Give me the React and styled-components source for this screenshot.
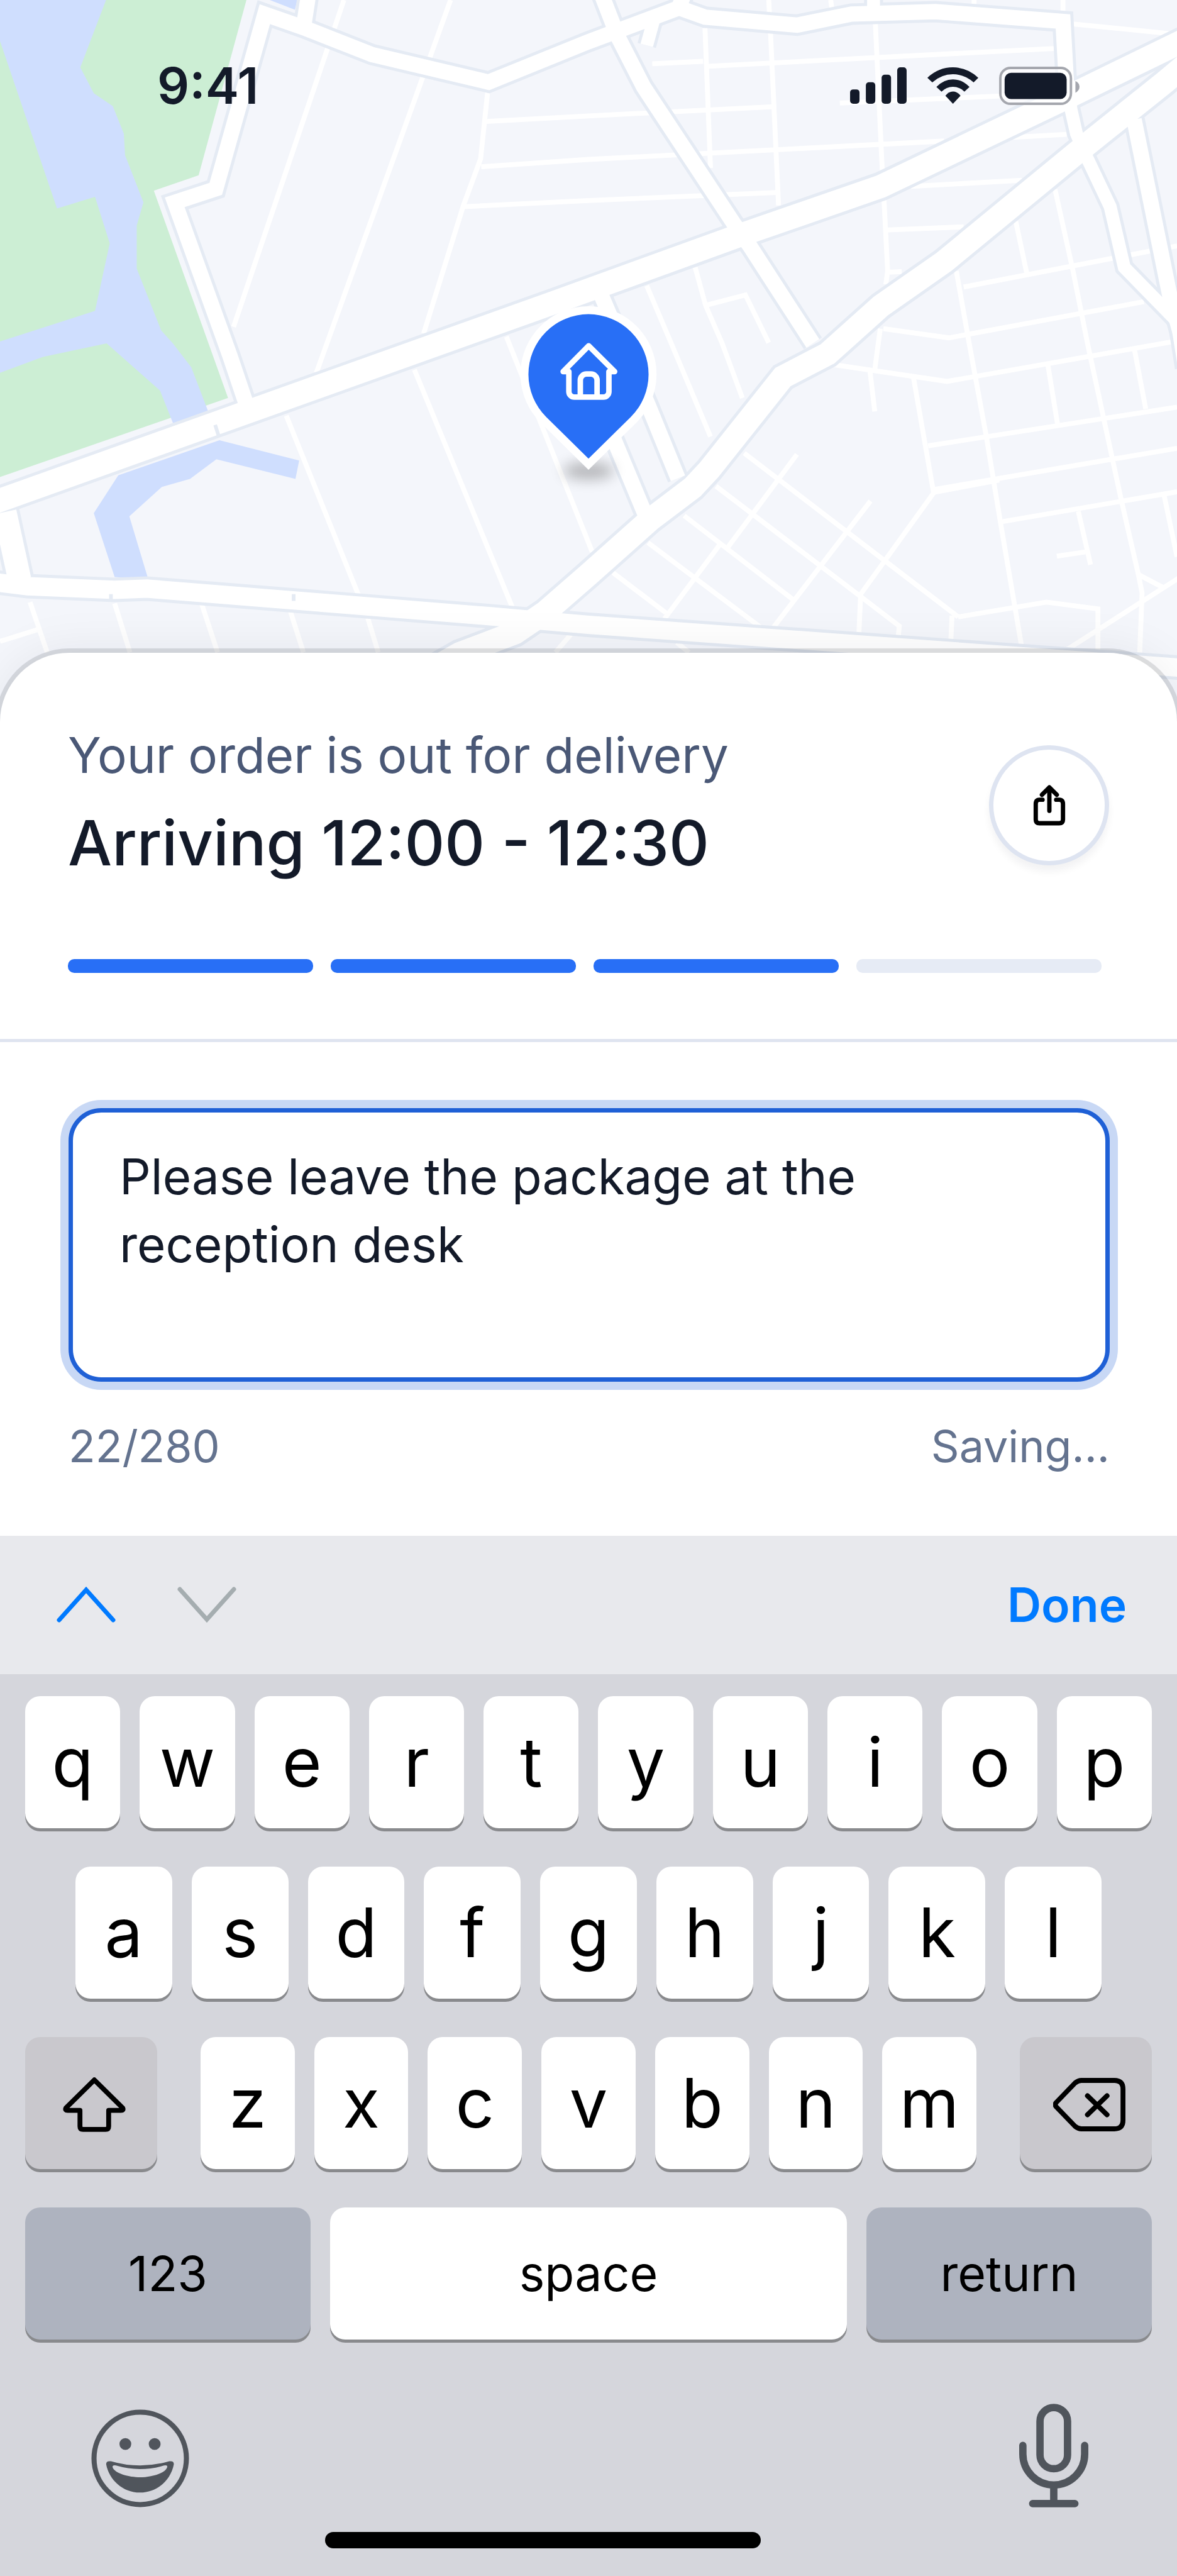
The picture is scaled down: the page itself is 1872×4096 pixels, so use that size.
import React, { useState } from 'react';
import styled, { createGlobalStyle } from 'styled-components';

const GlobalStyle = createGlobalStyle`
  * {
    box-sizing: border-box;
  }

  body {
    margin: 0;
    background: #ffffff;
    font-family: Inter, 'Liberation Sans', sans-serif;
    color: #131a29;
  }

  button, textarea {
    font-family: inherit;
    margin: 0;
  }
`;

const Page = styled.main`
  display: flex;
  flex-direction: column;
  min-height: 100vh;
`;

/* Map */

const Hero = styled.section`
  position: relative;
  height: 1150px;
  background: #f4f6fb;
`;

const MapSvg = styled.svg`
  display: block;
  width: 100%;
  height: 100%;
`;

const StatusBar = styled.header`
  position: absolute;
  top: 0;
  left: 0;
  right: 0;
  display: flex;
  align-items: center;
  justify-content: space-between;
  padding: 86px 155px 0 250px;
`;

const Clock = styled.time`
  font-size: 80px;
  font-weight: 600;
  line-height: 100px;
`;

const StatusIcons = styled.div`
  display: flex;
  align-items: center;
  gap: 33px;
`;

/* Order sheet */

const Sheet = styled.section`
  position: relative;
  margin-top: -112px;
  border-radius: 110px 110px 0 0;
  background: #ffffff;
  box-shadow: 0 0 0 7px rgba(20, 24, 36, 0.12), 0 0 80px rgba(20, 24, 36, 0.08);
`;

const OrderStatus = styled.div`
  padding: 115px 108px 105px;
  border-bottom: 5px solid #dfe4f0;
`;

const OrderHeader = styled.div`
  display: flex;
  align-items: center;
  justify-content: space-between;
`;

const Subtitle = styled.p`
  margin: 0 0 24px;
  font-size: 78px;
  line-height: 96px;
  color: #4a5876;
`;

const Title = styled.h1`
  margin: 0;
  font-size: 99px;
  font-weight: 500;
  line-height: 134px;
`;

const ShareButton = styled.button`
  display: flex;
  align-items: center;
  justify-content: center;
  width: 191px;
  height: 191px;
  padding: 0;
  border: 7px solid #dee4f1;
  border-radius: 50%;
  background: #ffffff;
  box-shadow: 0 10px 12px rgba(20, 24, 36, 0.05);
`;

const Progress = styled.div`
  display: grid;
  grid-template-columns: repeat(4, 1fr);
  gap: 28px;
  margin: 118px 12px 0 0;
`;

const Step = styled.div`
  height: 22px;
  border-radius: 10px;
  background: ${({ $done }) => ($done ? '#286ff6' : '#e6ebf5')};
`;

const NoteForm = styled.form`
  padding: 105px 107px 97px 109px;
`;

const NoteInput = styled.textarea`
  display: block;
  width: 100%;
  height: 435px;
  padding: 48px 74px;
  border: 7px solid #1f60d6;
  border-radius: 52px;
  outline: none;
  resize: none;
  background: #ffffff;
  box-shadow: 0 0 0 13px #c8d8f5;
  color: #131a29;
  font-size: 78px;
  line-height: 108px;
`;

const NoteMeta = styled.div`
  display: flex;
  justify-content: space-between;
  margin-top: 58px;
  font-size: 70px;
  line-height: 90px;
  color: #64738f;
`;

/* Keyboard */

const Accessory = styled.div`
  position: relative;
  display: flex;
  align-items: center;
  justify-content: space-between;
  height: 220px;
  padding: 0 80px 0 89px;
  background: #e8e9ed;
`;

const Arrows = styled.div`
  display: flex;
  gap: 96px;
`;

const PlainButton = styled.button`
  display: flex;
  padding: 0;
  border: 0;
  background: none;
  color: ${({ $color }) => $color || '#50555c'};
  font-size: 75px;
  font-weight: 600;
  line-height: 90px;
`;

const Keyboard = styled.section`
  flex: 1;
  padding: 35px 40px;
  background: #d5d6dc;
`;

const KeyRow = styled.div`
  display: flex;
  justify-content: space-between;
  gap: 31px;
  padding: 0 ${({ $inset }) => $inset || 0}px;
  margin-bottom: 61px;
`;

const Letters = styled.div`
  display: flex;
  flex: 1;
  gap: 31px;
  margin: 0 38px;
`;

const keyColors = {
  light: '#ffffff',
  muted: '#c9c8cd',
  dark: '#aeb3bf',
};

const Key = styled.button`
  display: flex;
  flex: ${({ $width }) => ($width ? `0 0 ${$width}px` : '1 1 0')};
  align-items: center;
  justify-content: center;
  min-width: 0;
  height: 210px;
  padding: 0;
  border: 0;
  border-radius: 24px;
  background: ${({ $tone }) => keyColors[$tone || 'light']};
  box-shadow: 0 5px 0 #898a8d;
  color: #000000;
  font-size: ${({ $word }) => ($word ? 77 : 108)}px;
  line-height: 130px;
`;

const IconKey = styled(Key)`
  padding: 4px 0 0 10px;
`;

const KeyboardFooter = styled.div`
  display: flex;
  align-items: flex-end;
  justify-content: space-between;
  padding: 41px 101px 39px 105px;
`;

const HomeIndicator = styled.div`
  width: 38.7%;
  height: 26px;
  margin-left: 26.6%;
  border-radius: 13px;
  background: #000000;
`;

const highways = [
  'M-20 823 L905 493 L1206 384 L1437 304 L1734 162 L1960 52',
  'M1960 84 L1900 134 L1765 242 L1540 427 L1437 499 L1350 577 L1277 615 L1157 766 L1130 795 L1060 848 L960 937 L890 998 L840 1032 L750 1066 L690 1100',
  'M8 835 L32 945',
];

const arterials = [
  'M-20 948 L45 956 L187 962 L240 960 L800 1005 L960 1019 L1389 1050 L1940 1090',
];

const avenues = [
  'M1120 -20 L1107 13 L960 68 L797 134 L607 89 L495 45 L432 23 L352 308 L285 330 L375 580 L402 660',
  'M495 45 L505 -20',
  'M1100 10 L1150 28 L1300 41 L1389 23 L1526 19 L1734 35 L1741 160',
  'M977 -20 L1008 60 L1050 142 L1198 366 L1223 401 L1326 560',
  'M1850 195 L1878 333 L1908 481 L1930 560',
  'M981 482 L1058 662 L1106 780',
  'M970 640 L1005 725 L1052 838',
];

const streets = [
  'M1066 34 L1055 74',
  'M1425 -20 L1425 25',
  'M1740 120 L1747 178 L1756 218 L1774 259 L1811 337 L1834 436 L1920 524 L1932 600',
];

const lanes = [
  'M561 0 L381 533',
  'M735 0 L516 608',
  'M796 145 L784 259 L756 335 L691 544',
  'M793 198 L960 189 L1263 174',
  'M785 272 L960 260 L1540 230',
  'M757 337 L960 327 L1266 314',
  'M1064 104 L1147 100',
  'M1155 108 L1720 79',
  'M1370 168 L1645 156',
  'M1652 224 L1740 219',
  'M1486 304 L1667 294',
  'M1448 375 L1572 370',
  'M1450 444 L1471 443',
  'M1150 46 L1159 274',
  'M1254 0 L1257 55 L1270 335',
  'M1355 0 L1357 14',
  'M1589 0 L1589 8',
  'M1734 0 L1734 18',
  'M1428 39 L1439 274 L1442 325 L1448 442 L1445 464',
  'M1750 39 L1920 56',
  'M1721 309 L1750 440 L1774 560 L1829 815 L1857 937 L1863 967 L1859 1070',
  'M1657 361 L1675 446',
  'M1560 442 L1581 560 L1609 712 L1632 852 L1667 1057',
  'M1572 468 L1811 422 L1920 401',
  'M1355 594 L1545 622 L1920 556',
  'M1436 536 L1430 580 L1427 603',
  'M1441 536 L1548 551 L1866 492',
  'M1419 604 L1427 671',
  'M1490 615 L1523 804 L1404 969 L1401 1035',
  'M1514 727 L1920 664',
  'M1525 798 L1920 731',
  'M1523 803 L1630 783',
  'M1633 851 L1920 802',
  'M1709 593 L1725 691',
  'M1850 567 L1869 667',
  'M1759 834 L1779 921',
  'M1724 907 L1771 900',
  'M1899 808 L1920 908',
  'M1857 937 L1897 958',
  'M1924 942 L1738 1061',
  'M1563 1006 L1707 982 L1791 993 L1791 1063',
  'M1553 1004 L1551 1046',
  'M1214 739 L1563 1006',
  'M1168 793 L1467 1021 L1465 1041',
  'M1116 841 L1294 978',
  'M1057 885 L1242 1024',
  'M1000 934 L1087 1000',
  'M1300 741 L1187 893',
  'M1175 887 L1084 1009',
  'M1420 817 L1261 1024',
  'M1055 466 L1095 560 L1159 712',
  'M1134 436 L1151 498 L1178 560 L1211 649',
  'M1151 498 L1216 481 L1254 559',
  'M1104 1048 L1124 1064',
  'M467 678 L585 971',
  'M676 603 L836 991',
  'M826 549 L966 900',
  'M49 982 L77 1064',
  'M61 1027 L0 1046',
  'M187 984 L212 1064',
  'M329 985 L355 1064',
  'M474 998 L495 1064',
  'M600 1008 L617 1064',
  'M931 1035 L906 1064',
];

const roadTypes = [
  { paths: streets, casing: 31, width: 21 },
  { paths: avenues, casing: 35, width: 25 },
  { paths: arterials, casing: 40, width: 30 },
  { paths: highways, casing: 48, width: 38 },
];

function DeliveryMap() {
  return (
    <MapSvg viewBox="0 0 1920 1180" preserveAspectRatio="xMidYMin slice" role="img" aria-label="Delivery map">
      <defs>
        <filter id="pinShadow" x="-50%" y="-100%" width="200%" height="300%">
          <feGaussianBlur stdDeviation="11" />
        </filter>
      </defs>
      <rect width="1920" height="1180" fill="#f4f6fb" />
      <path d="M0 0 H402 L324 286 L251 311 L372 649 L0 778 Z" fill="#cceed4" />
      <g fill="#cfdefe">
        <path d="M0 0 H173 L131 110 L153 152 L184 173 L202 218 L204 253 L234 330 L223 368 V438 L263 539 L282 560 L312 599 L340 672 L283 692 L261 637 L174 560 L70 582 L0 608 V557 L155 507 L179 397 L155 321 L93 340 L0 67 Z" />
        <path d="M440 0 H485 L481 16 Z" />
        <path d="M358 718 L488 751 L482 781 L353 749 L310 781 L264 794 L211 842 L242 945 L187 941 L153 837 L193 775 Z" />
      </g>
      <g fill="none" stroke="#ffffff" strokeWidth="8">
        {lanes.map((d) => <path key={d} d={d} />)}
      </g>
      <g fill="none" stroke="#e5ebf4">
        {roadTypes.map(({ paths, casing }) =>
          paths.map((d) => <path key={d} d={d} strokeWidth={casing} />)
        )}
      </g>
      <g fill="none" stroke="#ffffff">
        {roadTypes.map(({ paths, width }) =>
          paths.map((d) => <path key={d} d={d} strokeWidth={width} />)
        )}
      </g>
      <path d="M351 693 L357 712 M181 969 V980 M479 969 V980" stroke="#e5ebf4" strokeWidth="6" />
      <ellipse cx="960" cy="768" rx="42" ry="14" fill="#000000" opacity="0.26" filter="url(#pinShadow)" />
      <path
        d="M960 748 L891 680 A98 98 0 1 1 1029 680 Z"
        fill="#286ff6"
        stroke="#ffffff"
        strokeWidth="26"
        paintOrder="stroke"
      />
      <g transform="translate(820 480) scale(0.3333)" fill="none" stroke="#ffffff" strokeWidth="27" strokeLinejoin="round">
        <path d="M296 378 L421 252 L548 378 H520 V476 a27 27 0 0 1 -27 27 H351 a27 27 0 0 1 -27 -27 V378 Z" />
        <path d="M380 503 V420 a30 30 0 0 1 30 -30 h22 a30 30 0 0 1 30 30 V503" />
      </g>
    </MapSvg>
  );
}

function SignalIcon() {
  return (
    <svg width="90" height="58" viewBox="57 60 276 178" fill="#131a29">
      <rect x="57" y="168" width="46" height="70" rx="15" />
      <rect x="134" y="133" width="46" height="105" rx="15" />
      <rect x="211" y="96" width="46" height="142" rx="15" />
      <rect x="287" y="60" width="46" height="178" rx="15" />
    </svg>
  );
}

function WifiIcon() {
  return (
    <svg width="81" height="58" viewBox="433 60 249 178" fill="#131a29">
      <path d="M433 111 Q487 60 558 60 Q628 60 682 111 L659 134 Q614 94 558 94 Q502 94 457 134 Z" />
      <path d="M477 156 Q512 119 558 119 Q603 119 639 156 L614 179 Q590 155 558 155 Q526 155 502 179 Z" />
      <path d="M521 199 Q536 178 558 178 Q580 178 595 199 L558 238 Z" />
    </svg>
  );
}

function BatteryIcon() {
  return (
    <svg width="128" height="61" viewBox="783 54 394 188">
      <rect x="789" y="60" width="346" height="176" rx="50" fill="#ffffff" fillOpacity="0.6" stroke="#a5a7ae" strokeWidth="12" />
      <rect x="810" y="84" width="304" height="129" rx="32" fill="#131a29" />
      <path d="M1157 124 Q1177 134 1177 153 Q1177 172 1157 182 Z" fill="#a5a7ae" />
    </svg>
  );
}

function ShareIcon() {
  return (
    <svg width="52" height="65" viewBox="0 0 52 66" fill="none" stroke="#000000" strokeWidth="7">
      <path d="M15 24 H10 Q4 24 4 31 V56 Q4 62 10 62 H42 Q48 62 48 56 V31 Q48 24 42 24 H37" strokeLinecap="round" />
      <path d="M26 42 V5 M14 16 L26 4 L38 16" strokeLinecap="round" strokeLinejoin="round" />
    </svg>
  );
}

function ArrowIcon({ down }) {
  return (
    <svg width="96" height="58" viewBox="0 0 96 58" fill="none" stroke="currentColor" strokeWidth="7" strokeLinecap="round">
      <path d={down ? 'M5 4 L48 52 L91 4' : 'M5 53 L48 5 L91 53'} />
    </svg>
  );
}

function ShiftIcon() {
  return (
    <svg width="100" height="87" viewBox="0 0 103 89" fill="none" stroke="#000000" strokeWidth="8" strokeLinejoin="round">
      <path d="M51.5 4 L98 50 Q100 54 95 54 H75 V80 Q75 85 70 85 H33 Q28 85 28 80 V54 H8 Q3 54 5 50 Z" />
    </svg>
  );
}

function BackspaceIcon() {
  return (
    <svg width="115" height="85" viewBox="0 0 118 87" fill="none" stroke="#000000" strokeWidth="8" strokeLinecap="round">
      <path d="M5 40 L36 8 Q41 4 46 4 H100 Q114 4 114 18 V69 Q114 83 100 83 H46 Q41 83 36 79 L5 47 Q2 43.5 5 40 Z" />
      <path d="M56 29 L88 60 M88 29 L56 60" />
    </svg>
  );
}

function EmojiIcon() {
  return (
    <svg width="156" height="156" viewBox="58 85 482 482" fill="#50555c">
      <circle cx="299" cy="326" r="227" fill="none" stroke="#50555c" strokeWidth="25" />
      <circle cx="226" cy="255" r="29" />
      <circle cx="370" cy="255" r="29" />
      <path
        fillRule="evenodd"
        d="M132 356 Q130 337 155 340 Q298 382 442 340 Q466 337 464 356 C450 430 385 494 298 494 C212 494 146 430 132 356 Z M163 368 Q163 357 180 361 Q298 396 416 361 Q434 357 432 368 C425 400 350 419 298 419 C246 419 170 400 163 368 Z"
      />
    </svg>
  );
}

function MicIcon() {
  return (
    <svg width="110" height="165" viewBox="0 0 113 169" fill="none" stroke="#50555c" strokeWidth="12" strokeLinecap="round">
      <rect x="34" y="6" width="45" height="100" rx="22.5" />
      <path d="M6 68 V82 A50.5 50.5 0 0 0 107 82 V68 M56.5 134 V160 M22 163 H91" />
    </svg>
  );
}

const steps = [true, true, true, false];

function App() {
  const [note, setNote] = useState('Please leave the package at the reception desk');

  return (
    <Page>
      <GlobalStyle />
      <Hero>
        <DeliveryMap />
        <StatusBar>
          <Clock>9:41</Clock>
          <StatusIcons>
            <SignalIcon />
            <WifiIcon />
            <BatteryIcon />
          </StatusIcons>
        </StatusBar>
      </Hero>

      <Sheet>
        <OrderStatus>
          <OrderHeader>
            <div>
              <Subtitle>Your order is out for delivery</Subtitle>
              <Title>Arriving 12:00 - 12:30</Title>
            </div>
            <ShareButton type="button" aria-label="Share">
              <ShareIcon />
            </ShareButton>
          </OrderHeader>
          <Progress>
            {steps.map((done, index) => <Step key={index} $done={done} />)}
          </Progress>
        </OrderStatus>
        <NoteForm>
          <NoteInput
            aria-label="Delivery note"
            maxLength={280}
            spellCheck={false}
            value={note}
            onChange={(e) => setNote(e.target.value)}
          />
          <NoteMeta>
            <span>22/280</span>
            <span>Saving...</span>
          </NoteMeta>
        </NoteForm>
      </Sheet>

      <Accessory>
        <Arrows>
          <PlainButton type="button" $color="#007aff" aria-label="Previous field">
            <ArrowIcon />
          </PlainButton>
          <PlainButton type="button" $color="#a5adb0" aria-label="Next field">
            <ArrowIcon down />
          </PlainButton>
        </Arrows>
        <PlainButton type="button" $color="#007aff">Done</PlainButton>
      </Accessory>

      <Keyboard>
        <KeyRow>
          {[...'qwertyuiop'].map((k) => <Key type="button" key={k}>{k}</Key>)}
        </KeyRow>
        <KeyRow $inset={80}>
          {[...'asdfghjkl'].map((k) => <Key type="button" key={k}>{k}</Key>)}
        </KeyRow>
        <KeyRow>
          <IconKey type="button" $tone="muted" $width={210} aria-label="Shift"><ShiftIcon /></IconKey>
          <Letters>
            {[...'zxcvbnm'].map((k) => <Key type="button" key={k}>{k}</Key>)}
          </Letters>
          <IconKey type="button" $tone="muted" $width={210} aria-label="Delete"><BackspaceIcon /></IconKey>
        </KeyRow>
        <KeyRow>
          <Key type="button" $tone="dark" $width={454} $word>123</Key>
          <Key type="button" $word>space</Key>
          <Key type="button" $tone="dark" $width={454} $word>return</Key>
        </KeyRow>
        <KeyboardFooter>
          <PlainButton type="button" aria-label="Emoji"><EmojiIcon /></PlainButton>
          <PlainButton type="button" aria-label="Dictate"><MicIcon /></PlainButton>
        </KeyboardFooter>
        <HomeIndicator />
      </Keyboard>
    </Page>
  );
}

export default App;
